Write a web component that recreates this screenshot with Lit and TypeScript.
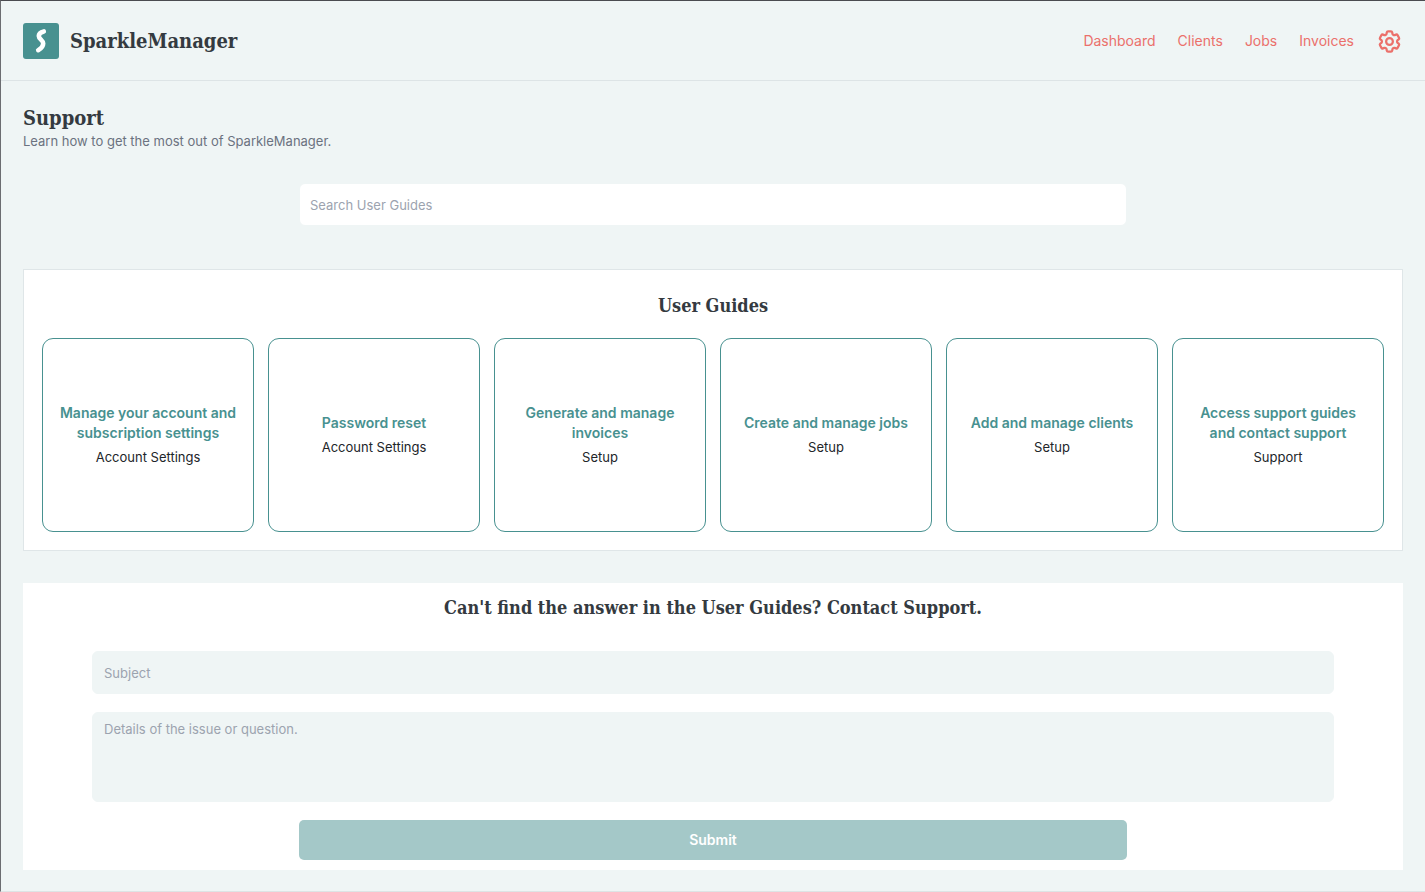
import { LitElement, html, css } from "lit";
import { customElement } from "lit/decorators.js";

interface Guide {
  title: string;
  category: string;
}

const GUIDES: Guide[] = [
  { title: "Manage your account and subscription settings", category: "Account Settings" },
  { title: "Password reset", category: "Account Settings" },
  { title: "Generate and manage invoices", category: "Setup" },
  { title: "Create and manage jobs", category: "Setup" },
  { title: "Add and manage clients", category: "Setup" },
  { title: "Access support guides and contact support", category: "Support" },
];

const LINKS = ["Dashboard", "Clients", "Jobs", "Invoices"];

@customElement("app-root")
export class AppRoot extends LitElement {
  static styles = css`
    :host {
      display: block;
      box-sizing: border-box;
      min-height: 100vh;
      border-top: 1px solid #4a4b50;
      border-left: 1px solid #6b6d71;
      border-bottom: 1px solid #dde4e5;
      background: #eff5f5;
      color: #343a40;
      font-family: Inter, "Liberation Sans", sans-serif;
      font-size: 13px;
      line-height: 20px;
    }
    *,
    *::before,
    *::after {
      box-sizing: border-box;
    }
    h1,
    h2,
    p {
      margin: 0;
    }
    .header {
      display: flex;
      align-items: center;
      justify-content: space-between;
      padding: 22px 22px 21px;
      border-bottom: 1px solid #dde4e6;
    }
    .brand,
    .title,
    .heading {
      font-family: "Roboto Slab", "DejaVu Serif Condensed", "DejaVu Serif", serif;
      font-weight: 600;
    }
    .brand {
      display: flex;
      align-items: center;
      gap: 11px;
      font-size: 20px;
      line-height: 28px;
      color: #343a40;
      text-decoration: none;
    }
    .logo {
      display: block;
      width: 36px;
      height: 36px;
    }
    .nav {
      display: flex;
      align-items: center;
      gap: 22px;
    }
    .link {
      color: #eb706b;
      font-size: 14px;
      text-decoration: none;
    }
    .settings {
      display: flex;
      padding: 0;
      border: 0;
      background: none;
      color: #eb706b;
      cursor: pointer;
    }
    .cog {
      display: block;
      width: 27px;
      height: 27px;
    }
    .main {
      padding: 23px 22px 21px;
    }
    .title {
      font-size: 20px;
      line-height: 28px;
    }
    .lead {
      line-height: 18px;
      color: #6b7280;
    }
    .field {
      display: block;
      height: 43px;
      border: 1px solid #eff5f5;
      border-radius: 6px;
      padding: 10px;
      color: #343a40;
      font: inherit;
      outline-color: #489190;
    }
    .field::placeholder {
      color: #9ca3af;
      opacity: 1;
    }
    .search {
      width: 60%;
      margin: 33px auto 43px;
      background: #fff;
    }
    .guides {
      margin-bottom: 32px;
      padding: 22px 18px 18px;
      border: 1px solid #dfe6e8;
      background: #fff;
    }
    .heading {
      font-size: 18px;
      line-height: 28px;
      text-align: center;
    }
    .cards {
      display: grid;
      grid-template-columns: repeat(6, minmax(0, 1fr));
      gap: 14px;
      margin-top: 18px;
    }
    .card {
      display: flex;
      flex-direction: column;
      align-items: center;
      justify-content: center;
      gap: 4px;
      min-height: 194px;
      padding: 14px;
      border: 1px solid #489190;
      border-radius: 11px;
      color: #212529;
      text-align: center;
      text-decoration: none;
    }
    .card-title {
      color: #489190;
      font-size: 14px;
      font-weight: 600;
    }
    .contact {
      display: flex;
      flex-direction: column;
      align-items: center;
      gap: 18px;
      padding: 11px 0 10px;
      background: #fff;
    }
    .contact .heading {
      margin-bottom: 11px;
    }
    .subject,
    .details {
      width: 90%;
      background: #eff5f5;
      padding: 10px 11px;
    }
    .details {
      height: 90px;
      padding: 6px 11px;
      resize: none;
    }
    .submit {
      width: 60%;
      padding: 10px;
      border: 0;
      border-radius: 5px;
      background: #a4c8c8;
      color: #fff;
      font: inherit;
      font-size: 14px;
      font-weight: 600;
      cursor: pointer;
    }
  `;

  render() {
    return html`
      <header class="header">
        <a class="brand" href="#home">
          <svg class="logo" viewBox="0 0 36 36" aria-hidden="true">
            <rect width="36" height="36" rx="3" fill="#489190" />
            <path
              d="M20.8 8.4C18 9 15.8 10.6 15.8 13C15.8 16 20.3 17.2 20.2 20.4C20.1 23.6 17.8 25.8 15.2 27.2"
              fill="none"
              stroke="#fff"
              stroke-width="4.6"
              stroke-linecap="round"
            />
          </svg>
          <span>SparkleManager</span>
        </a>
        <nav class="nav" aria-label="Main">
          ${LINKS.map((name) => html`<a class="link" href="#${name.toLowerCase()}">${name}</a>`)}
          <button class="settings" type="button" aria-label="Settings">
            <svg
              class="cog"
              viewBox="0 0 24 24"
              fill="none"
              stroke="currentColor"
              stroke-width="2"
              stroke-linecap="round"
              stroke-linejoin="round"
              aria-hidden="true"
            >
              <path
                d="M9.594 3.94c.09-.542.56-.94 1.11-.94h2.593c.55 0 1.02.398 1.11.94l.213 1.281c.063.374.313.686.645.87.074.04.147.083.22.127.325.196.72.257 1.075.124l1.217-.456a1.125 1.125 0 0 1 1.37.49l1.296 2.247a1.125 1.125 0 0 1-.26 1.431l-1.003.827c-.293.241-.438.613-.43.992a7.723 7.723 0 0 1 0 .255c-.008.378.137.75.43.991l1.004.827c.424.35.534.955.26 1.43l-1.298 2.247a1.125 1.125 0 0 1-1.369.491l-1.217-.456c-.355-.133-.75-.072-1.076.124a6.47 6.47 0 0 1-.22.128c-.331.183-.581.495-.644.869l-.213 1.281c-.09.543-.56.94-1.11.94h-2.594c-.55 0-1.019-.398-1.11-.94l-.213-1.281c-.062-.374-.312-.686-.644-.87a6.52 6.52 0 0 1-.22-.127c-.325-.196-.72-.257-1.076-.124l-1.217.456a1.125 1.125 0 0 1-1.369-.49l-1.297-2.247a1.125 1.125 0 0 1 .26-1.431l1.004-.827c.292-.24.437-.613.43-.991a6.932 6.932 0 0 1 0-.255c.007-.38-.138-.751-.43-.992l-1.004-.827a1.125 1.125 0 0 1-.26-1.43l1.297-2.247a1.125 1.125 0 0 1 1.37-.491l1.216.456c.356.133.751.072 1.076-.124.072-.044.146-.086.22-.128.332-.183.582-.495.644-.869l.214-1.28Z"
              />
              <circle cx="12" cy="12" r="3" />
            </svg>
          </button>
        </nav>
      </header>

      <main class="main">
        <h1 class="title">Support</h1>
        <p class="lead">Learn how to get the most out of SparkleManager.</p>

        <input
          class="field search"
          type="search"
          aria-label="Search User Guides"
          placeholder="Search User Guides"
        />

        <section class="guides">
          <h2 class="heading">User Guides</h2>
          <div class="cards">
            ${GUIDES.map(
              (guide) => html`
                <a class="card" href="#guide">
                  <span class="card-title">${guide.title}</span>
                  <span>${guide.category}</span>
                </a>
              `
            )}
          </div>
        </section>

        <form class="contact" @submit=${(e: Event) => e.preventDefault()}>
          <h2 class="heading">Can't find the answer in the User Guides? Contact Support.</h2>
          <input class="field subject" type="text" aria-label="Subject" placeholder="Subject" />
          <textarea
            class="field details"
            aria-label="Details of the issue or question."
            placeholder="Details of the issue or question."
          ></textarea>
          <button class="submit" type="submit">Submit</button>
        </form>
      </main>
    `;
  }
}
